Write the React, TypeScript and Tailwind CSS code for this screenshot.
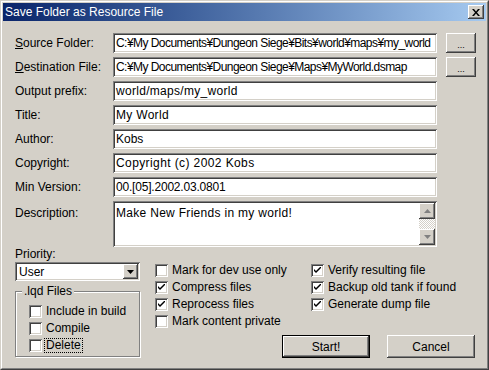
import React from "react";

const sunken =
  "bg-white shadow-[inset_1px_1px_0_#808080,inset_-1px_-1px_0_#ffffff,inset_2px_2px_0_#404040,inset_-2px_-2px_0_#d4d0c8]";
const raised =
  "bg-[#d4d0c8] shadow-[inset_-1px_-1px_0_#404040,inset_1px_1px_0_#ffffff,inset_-2px_-2px_0_#808080,inset_2px_2px_0_#d4d0c8]";

function Field({ value, cls }: { value: string; cls?: string }) {
  return (
    <div className={`${sunken} w-[324px] h-[20px] flex items-center pl-[3px] whitespace-nowrap overflow-hidden ${cls ?? ""}`}>
      {value}
    </div>
  );
}

function Row({ label, value, browse, cls }: { label: React.ReactNode; value: string; browse?: boolean; cls?: string }) {
  return (
    <div className="flex items-center h-[20px] mb-[4px]">
      <div className="w-[98px]">{label}</div>
      <Field value={value} cls={cls} />
      {browse && (
        <div className={`${raised} ml-[9px] w-[30px] h-[20px] flex items-center justify-center text-[9px] leading-none pt-[4px]`}>
          ...
        </div>
      )}
    </div>
  );
}

function Check({ checked }: { checked?: boolean }) {
  return (
    <div className={`${sunken} w-[13px] h-[13px] shrink-0 flex items-center justify-center`}>
      {checked && (
        <svg width="7" height="7" viewBox="0 0 7 7">
          <path d="M0 2 L0 4 L2 6 L7 1 L7 -1 L2 4 Z" fill="#000" />
        </svg>
      )}
    </div>
  );
}

function CheckRow({ label, checked, focus }: { label: string; checked?: boolean; focus?: boolean }) {
  return (
    <div className="flex items-center h-[17px]">
      <Check checked={checked} />
      <span className={`${focus ? "ml-[3px] outline-1 outline-dotted outline-black px-[1px]" : "ml-[4px]"} leading-[13px]`}>
        {label}
      </span>
    </div>
  );
}

export default function App() {
  return (
    <div className="w-[489px] h-[370px] bg-[#d4d0c8] font-['Liberation_Sans',Arial,sans-serif] text-[12px] text-black border border-t-[#d4d0c8] border-l-[#d4d0c8] border-b-[#404040] border-r-[#404040]">
      <div className="w-full h-full border border-t-white border-l-white border-b-[#808080] border-r-[#808080] p-[1px] flex flex-col">
        {/* Title bar */}
        <div className="h-[18px] bg-gradient-to-r from-[#0a246a] to-[#a6caf0] flex items-center pl-[2px] pr-[2px] shrink-0">
          <span className="text-white text-[12px] leading-none">Save Folder as Resource File</span>
          <div className={`${raised} ml-auto w-[16px] h-[14px] flex items-center justify-center`}>
            <svg width="8" height="7" viewBox="0 0 8 7">
              <path d="M0 0h2l2 2.5L6 0h2L5 3.5 8 7H6L4 4.5 2 7H0l3-3.5z" fill="#000" />
            </svg>
          </div>
        </div>

        {/* Body */}
        <div className="pl-[12px] pt-[12px] flex flex-col">
          <Row
            label={
              <span>
                <span className="underline">S</span>ource Folder:
              </span>
            }
            value="C:¥My Documents¥Dungeon Siege¥Bits¥world¥maps¥my_world"
            cls="tracking-[-0.55px]"
            browse
          />
          <Row
            label={
              <span>
                <span className="underline">D</span>estination File:
              </span>
            }
            value="C:¥My Documents¥Dungeon Siege¥Maps¥MyWorld.dsmap"
            cls="tracking-[-0.55px]"
            browse
          />
          <Row label="Output prefix:" value="world/maps/my_world" cls="tracking-[0.3px]" />
          <Row label="Title:" value="My World" cls="tracking-[0.3px]" />
          <Row label="Author:" value="Kobs" />
          <Row label="Copyright:" value="Copyright (c) 2002 Kobs" cls="tracking-[0.4px]" />
          <Row label="Min Version:" value="00.[05].2002.03.0801" cls="tracking-[-0.2px]" />

          {/* Description */}
          <div className="flex items-start h-[46px]">
            <div className="w-[98px] pt-[3px]">Description:</div>
            <div className={`${sunken} w-[324px] h-[46px] flex p-[2px]`}>
              <div className="flex-1 pl-[1px] pt-[3px] leading-[14px] tracking-[0.3px]">Make New Friends in my world!</div>
              <div className="w-[16px] h-full flex flex-col">
                <div className={`${raised} h-[16px] flex items-center justify-center`}>
                  <svg width="7" height="4" viewBox="0 0 7 4">
                    <path d="M3.5 0L7 4H0z" fill="#808080" />
                  </svg>
                </div>
                <div className="flex-1 bg-[repeating-conic-gradient(#ffffff_0_25%,#d4d0c8_0_50%)] bg-[length:2px_2px]" />
                <div className={`${raised} h-[16px] flex items-center justify-center`}>
                  <svg width="7" height="4" viewBox="0 0 7 4">
                    <path d="M0 0h7L3.5 4z" fill="#808080" />
                  </svg>
                </div>
              </div>
            </div>
          </div>

          {/* Bottom section */}
          <div className="flex">
            <div className="w-[125px] flex flex-col">
              <div className="h-[15px] leading-[15px]">Priority:</div>
              <div className={`${sunken} h-[19px] flex items-center p-[2px]`}>
                <div className="flex-1 pl-[2px]">User</div>
                <div className={`${raised} w-[15px] h-[15px] flex items-center justify-center`}>
                  <svg width="7" height="4" viewBox="0 0 7 4">
                    <path d="M0 0h7L3.5 4z" fill="#000" />
                  </svg>
                </div>
              </div>
              <div className="relative mt-[10px] h-[66px] border border-[#808080] shadow-[1px_1px_0_#ffffff,inset_1px_1px_0_#ffffff] pl-[13px] pt-[11px]">
                <span className="absolute left-[6px] top-[-8px] bg-[#d4d0c8] px-[2px] leading-[14px]">.lqd Files</span>
                <CheckRow label="Include in build" />
                <CheckRow label="Compile" />
                <CheckRow label="Delete" focus />
              </div>
            </div>

            <div className="ml-[15px] flex flex-col">
              <div className="flex pt-[15px]">
                <div className="w-[156px] flex flex-col">
                  <CheckRow label="Mark for dev use only" />
                  <CheckRow label="Compress files" checked />
                  <CheckRow label="Reprocess files" checked />
                  <CheckRow label="Mark content private" />
                </div>
                <div className="flex flex-col">
                  <CheckRow label="Verify resulting file" checked />
                  <CheckRow label="Backup old tank if found" checked />
                  <CheckRow label="Generate dump file" checked />
                </div>
              </div>
              <div className="flex mt-[5px] pl-[127px] gap-[17px]">
                <div className="w-[88px] h-[23px] border border-black">
                  <div className={`${raised} w-full h-full flex items-center justify-center`}>Start!</div>
                </div>
                <div className={`${raised} w-[88px] h-[23px] flex items-center justify-center`}>Cancel</div>
              </div>
            </div>
          </div>
        </div>
      </div>
    </div>
  );
}
